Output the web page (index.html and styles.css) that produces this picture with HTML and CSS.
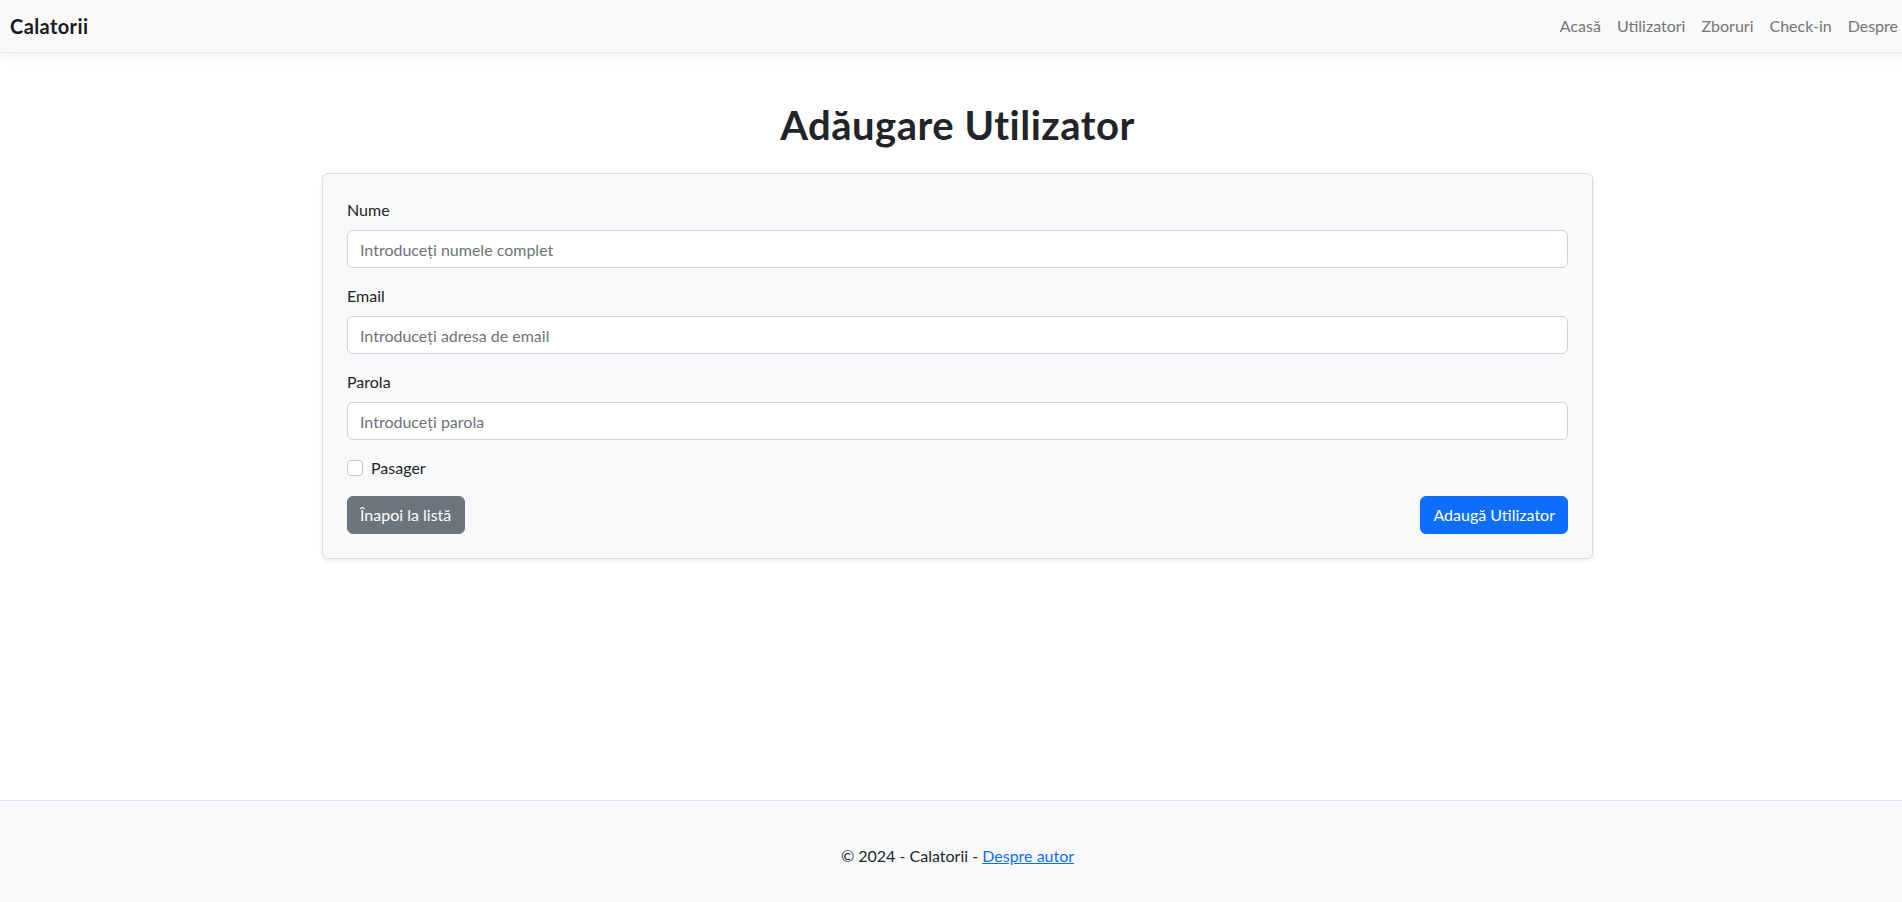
FILE: index.html
```html
<!DOCTYPE html>
<html lang="ro">
<head>
<meta charset="utf-8">
<title>Adăugare Utilizator - Calatorii</title>
<link rel="stylesheet" href="styles.css">
</head>
<body>
<header class="navbar">
  <a class="brand" href="#">Calatorii</a>
  <nav class="nav">
    <a class="nav-link" href="#">Acasă</a>
    <a class="nav-link" href="#">Utilizatori</a>
    <a class="nav-link" href="#">Zboruri</a>
    <a class="nav-link" href="#">Check-in</a>
    <a class="nav-link" href="#">Despre</a>
  </nav>
</header>
<main class="main">
  <h1 class="title">Adăugare Utilizator</h1>
  <form class="card">
    <div class="field">
      <label class="label" for="nume">Nume</label>
      <input class="input" id="nume" type="text" placeholder="Introduceți numele complet">
    </div>
    <div class="field">
      <label class="label" for="email">Email</label>
      <input class="input" id="email" type="email" placeholder="Introduceți adresa de email">
    </div>
    <div class="field">
      <label class="label" for="parola">Parola</label>
      <input class="input" id="parola" type="password" placeholder="Introduceți parola">
    </div>
    <div class="check">
      <span class="box"></span>
      <label class="check-label">Pasager</label>
    </div>
    <div class="actions">
      <a class="btn btn-secondary" href="#">Înapoi la listă</a>
      <button class="btn btn-primary" type="button">Adaugă Utilizator</button>
    </div>
  </form>
</main>
<footer class="footer">
  <span>© 2024 - Calatorii - <a class="footer-link" href="#">Despre autor</a></span>
</footer>
</body>
</html>
```
FILE: styles.css
```css
html {
  overflow: hidden;
}
body {
  margin: 0;
  width: 1915px;
  min-height: 902px;
  display: flex;
  flex-direction: column;
  font-family: Lato, "Liberation Sans", sans-serif;
  font-size: 16px;
  line-height: 24px;
  color: #212529;
  background: #fff;
}
a { text-decoration: none; }

.navbar {
  height: 53px;
  box-sizing: border-box;
  display: flex;
  align-items: center;
  justify-content: space-between;
  padding: 0 9px 0 10px;
  background: #f8f9fa;
  border-bottom: 1px solid #e9ecef;
  box-shadow: 0 4px 12px rgba(0, 0, 0, 0.05);
  position: relative;
  z-index: 1;
}
.brand {
  font-size: 20px;
  font-weight: 700;
  letter-spacing: 0.4px;
  color: #1a1a1a;
  line-height: 30px;
}
.nav {
  display: flex;
}
.nav-link {
  padding: 8px;
  color: #757575;
  font-size: 16px;
  line-height: 24px;
}

.main {
  display: flex;
  flex-direction: column;
  align-items: center;
}
.title {
  margin: 48px 0 24px;
  font-size: 40px;
  line-height: 48px;
  font-weight: 700;
  letter-spacing: 0.5px;
  color: #212529;
}
.card {
  width: 1271px;
  box-sizing: border-box;
  padding: 24px;
  background: #f8f9fa;
  border: 1px solid #dadde1;
  border-radius: 6px;
  box-shadow: 0 2px 4px rgba(0, 0, 0, 0.075);
  display: flex;
  flex-direction: column;
}
.field {
  display: flex;
  flex-direction: column;
  margin-bottom: 16px;
}
.label {
  margin-bottom: 8px;
  color: #212529;
}
.input {
  height: 38px;
  box-sizing: border-box;
  padding: 6px 12px;
  border: 1px solid #ced4da;
  border-radius: 6px;
  background: #fff;
  font-family: inherit;
  font-size: 16px;
  color: #212529;
  outline: none;
}
.input::placeholder {
  color: #6e737b;
  opacity: 1;
}
.check {
  display: flex;
  align-items: center;
  height: 24px;
  margin-bottom: 16px;
}
.box {
  width: 16px;
  height: 16px;
  box-sizing: border-box;
  border: 1px solid #c4c8cd;
  border-radius: 4px;
  background: #fff;
  margin-right: 8px;
}
.actions {
  display: flex;
  justify-content: space-between;
}
.btn {
  height: 38px;
  box-sizing: border-box;
  padding: 6px 12px;
  border: 1px solid transparent;
  border-radius: 6px;
  font-family: inherit;
  font-size: 16px;
  line-height: 24px;
  color: #fff;
  display: inline-flex;
  align-items: center;
}
.btn-secondary {
  background: #6c757d;
  border-color: #6c757d;
  padding-right: 13px;
}
.btn-primary {
  background: #0d6efd;
  border-color: #0d6efd;
}

.footer {
  margin-top: auto;
  height: 102px;
  box-sizing: border-box;
  border-top: 1px solid #dee2e6;
  background: #f8f9fa;
  display: flex;
  justify-content: center;
  padding-top: 43px;
  color: #212529;
}
.footer-link {
  color: #0d6efd;
  text-decoration: underline;
}
```
